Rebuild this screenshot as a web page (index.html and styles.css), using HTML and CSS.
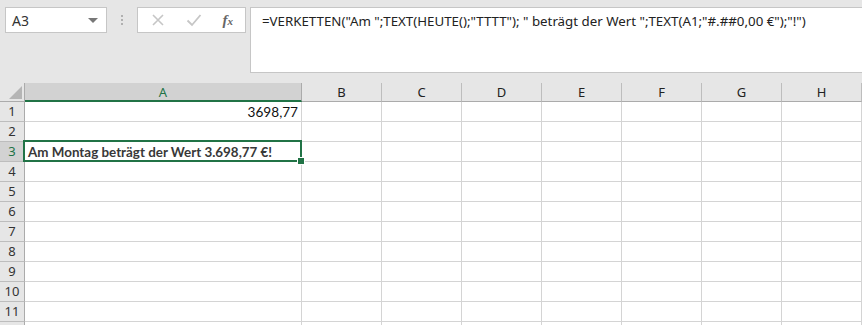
FILE: index.html
```html
<!DOCTYPE html>
<html lang="de">
  <head>
    <meta charset="UTF-8">
    <title>VERKETTEN</title>
    <link rel="stylesheet" href="styles.css">
  </head>
  <body>
    <div id="topbar">
      <div class="namebox">
        <span>A3</span>
        <span class="arrow"></span>
      </div>
      <div class="dots"><i></i><i></i><i></i></div>
      <div class="fxbtns">
        <svg width="14" height="14" viewBox="0 0 14 14"><path d="M2 2 L12 12 M12 2 L2 12" stroke="#c6c6c6" stroke-width="1.6" fill="none"/></svg>
        <svg width="16" height="14" viewBox="0 0 16 14"><path d="M1.5 7.5 L6 12 L14.5 2" stroke="#c6c6c6" stroke-width="1.8" fill="none"/></svg>
        <span class="fx">f<sub>x</sub></span>
      </div>
      <div class="formula">=VERKETTEN("Am ";TEXT(HEUTE();"TTTT"); " beträgt der Wert ";TEXT(A1;"#.##0,00 €");"!")</div>
    </div>
    <div id="sheet">
      <div class="corner"><span></span></div>
      <div class="colhead sel">A</div>
      <div class="colhead">B</div>
      <div class="colhead">C</div>
      <div class="colhead">D</div>
      <div class="colhead">E</div>
      <div class="colhead">F</div>
      <div class="colhead">G</div>
      <div class="colhead">H</div>

      <div class="rowhead">1</div>
      <div class="cell num">3698,77</div>
      <div class="cell"></div><div class="cell"></div><div class="cell"></div><div class="cell"></div><div class="cell"></div><div class="cell"></div><div class="cell"></div>

      <div class="rowhead">2</div>
      <div class="cell"></div><div class="cell"></div><div class="cell"></div><div class="cell"></div><div class="cell"></div><div class="cell"></div><div class="cell"></div><div class="cell"></div>

      <div class="rowhead sel">3</div>
      <div class="cell active"><b>Am Montag beträgt der Wert 3.698,77 €!</b><span class="handle"></span></div>
      <div class="cell"></div><div class="cell"></div><div class="cell"></div><div class="cell"></div><div class="cell"></div><div class="cell"></div><div class="cell"></div>

      <div class="rowhead">4</div>
      <div class="cell"></div><div class="cell"></div><div class="cell"></div><div class="cell"></div><div class="cell"></div><div class="cell"></div><div class="cell"></div><div class="cell"></div>
      <div class="rowhead">5</div>
      <div class="cell"></div><div class="cell"></div><div class="cell"></div><div class="cell"></div><div class="cell"></div><div class="cell"></div><div class="cell"></div><div class="cell"></div>
      <div class="rowhead">6</div>
      <div class="cell"></div><div class="cell"></div><div class="cell"></div><div class="cell"></div><div class="cell"></div><div class="cell"></div><div class="cell"></div><div class="cell"></div>
      <div class="rowhead">7</div>
      <div class="cell"></div><div class="cell"></div><div class="cell"></div><div class="cell"></div><div class="cell"></div><div class="cell"></div><div class="cell"></div><div class="cell"></div>
      <div class="rowhead">8</div>
      <div class="cell"></div><div class="cell"></div><div class="cell"></div><div class="cell"></div><div class="cell"></div><div class="cell"></div><div class="cell"></div><div class="cell"></div>
      <div class="rowhead">9</div>
      <div class="cell"></div><div class="cell"></div><div class="cell"></div><div class="cell"></div><div class="cell"></div><div class="cell"></div><div class="cell"></div><div class="cell"></div>
      <div class="rowhead">10</div>
      <div class="cell"></div><div class="cell"></div><div class="cell"></div><div class="cell"></div><div class="cell"></div><div class="cell"></div><div class="cell"></div><div class="cell"></div>
      <div class="rowhead">11</div>
      <div class="cell"></div><div class="cell"></div><div class="cell"></div><div class="cell"></div><div class="cell"></div><div class="cell"></div><div class="cell"></div><div class="cell"></div>
      <div class="rowhead"></div>
      <div class="cell"></div><div class="cell"></div><div class="cell"></div><div class="cell"></div><div class="cell"></div><div class="cell"></div><div class="cell"></div><div class="cell"></div>
    </div>
  </body>
</html>
```

FILE: styles.css
```css
* {padding: 0; margin: 0; box-sizing: border-box;}
html, body {
  background: #e6e6e6;
  overflow: hidden;
  font-family: "Noto Sans", "Open Sans", sans-serif;
  color: #222;
}
#topbar {
  height: 83px;
  display: flex;
  align-items: flex-start;
  padding-top: 7px;
  padding-left: 5px;
}
.namebox {
  width: 102px;
  height: 26px;
  background: #fff;
  border: solid 1px #c6c6c6;
  display: flex;
  align-items: center;
  justify-content: space-between;
  padding: 0 8px 0 6px;
  font-size: 14px;
  color: #333;
}
.arrow {
  width: 0;
  height: 0;
  border-left: 5px solid transparent;
  border-right: 5px solid transparent;
  border-top: 5px solid #777;
}
.dots {
  width: 30px;
  height: 26px;
  display: flex;
  flex-direction: column;
  align-items: center;
  justify-content: center;
  gap: 2px;
}
.dots i {
  display: block;
  width: 2px;
  height: 2px;
  background: #b0b0b0;
}
.fxbtns {
  width: 109px;
  height: 26px;
  background: #fff;
  border: solid 1px #c6c6c6;
  display: flex;
  align-items: center;
  justify-content: space-between;
  padding: 0 12px 0 13px;
}
.fx {
  font-family: "Liberation Serif", serif;
  font-style: italic;
  font-size: 15px;
  color: #666;
  font-weight: bold;
}
.fx sub {
  font-size: 11px;
  vertical-align: 0;
}
.formula {
  flex: 1;
  margin-left: 4px;
  margin-right: -2px;
  height: 66px;
  background: #fff;
  border: solid 1px #c6c6c6;
  border-right: none;
  padding: 4px 0 0 11px;
  font-size: 13.3px;
  color: #222;
  white-space: nowrap;
}
#sheet {
  display: grid;
  grid-template-columns: 25px 277px repeat(7, 80px);
  grid-template-rows: 19px repeat(12, 20px);
  background: #fff;
}
.corner {
  background: #e6e6e6;
  border-right: solid 1px #ababab;
  border-bottom: solid 1px #ababab;
  position: relative;
}
.corner span {
  position: absolute;
  right: 2px;
  bottom: 2px;
  width: 0;
  height: 0;
  border-left: 13px solid transparent;
  border-bottom: 13px solid #b5b5b5;
}
.colhead {
  background: #e6e6e6;
  border-right: solid 1px #bdbdbd;
  border-bottom: solid 1px #ababab;
  text-align: center;
  font-size: 13px;
  line-height: 18px;
  color: #222;
}
.colhead.sel {
  background: #d2d2d2;
  color: #217346;
  border-bottom: solid 2px #217346;
  border-right-color: #ababab;
}
.rowhead {
  background: #e6e6e6;
  border-right: solid 1px #ababab;
  border-bottom: solid 1px #bdbdbd;
  text-align: center;
  font-size: 13px;
  line-height: 19px;
  color: #333;
}
.rowhead.sel {
  background: #d2d2d2;
  color: #217346;
}
.cell {
  border-right: solid 1px #d4d4d4;
  border-bottom: solid 1px #d4d4d4;
  font-family: "Lato", "Liberation Sans", sans-serif;
  font-size: 13.6px;
  line-height: 20px;
  padding: 0 3px;
  white-space: nowrap;
  color: #111;
}
.cell.num {
  text-align: right;
}
.cell.active {
  position: relative;
  overflow: visible;
}
.cell.active::before {
  content: "";
  position: absolute;
  left: -2px;
  top: -2px;
  right: -1px;
  bottom: -1px;
  border: solid 2px #217346;
}
.cell.active b {
  color: #383838;
  font-size: 13.4px;
  position: relative;
  left: 0;
}
.handle {
  position: absolute;
  right: -4px;
  bottom: -4px;
  width: 6px;
  height: 6px;
  background: #217346;
  border: solid 1px #fff;
  box-sizing: content-box;
}
```
